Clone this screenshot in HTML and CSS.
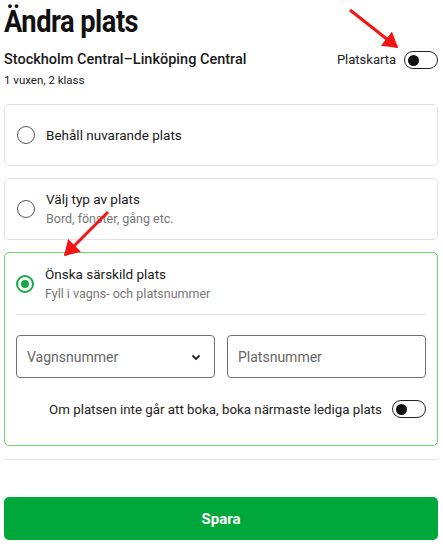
FILE: index.html
```html
<!DOCTYPE html>
<html lang="sv">
<head>
<meta charset="utf-8">
<link rel="stylesheet" href="styles.css">
</head>
<body>
<div class="page">
  <h1 class="title"><span class="title-text">Ändra plats</span></h1>
  <div class="trip">
    <div class="trip-info">
      <div class="route">Stockholm Central–Linköping Central</div>
      <div class="pax">1 vuxen, 2 klass</div>
    </div>
    <div class="map-toggle">
      <span class="map-label">Platskarta</span>
      <span class="toggle"><span class="knob"></span></span>
    </div>
  </div>

  <div class="card">
    <div class="option">
      <span class="radio"></span>
      <div class="opt-text"><div class="opt-title">Behåll nuvarande plats</div></div>
    </div>
  </div>

  <div class="card">
    <div class="option">
      <span class="radio"></span>
      <div class="opt-text">
        <div class="opt-title">Välj typ av plats</div>
        <div class="opt-sub">Bord, fönster, gång etc.</div>
      </div>
    </div>
  </div>

  <div class="card card-active">
    <div class="option">
      <span class="radio radio-on"><span class="dot"></span></span>
      <div class="opt-text">
        <div class="opt-title">Önska särskild plats</div>
        <div class="opt-sub">Fyll i vagns- och platsnummer</div>
      </div>
    </div>
    <div class="divider"></div>
    <div class="fields">
      <div class="field select">
        <span class="ph">Vagnsnummer</span>
        <svg class="chev" width="10" height="7" viewBox="0 0 10 7"><path d="M1.5 1.5 L5 5 L8.5 1.5" fill="none" stroke="#222" stroke-width="1.8"/></svg>
      </div>
      <div class="field">
        <span class="ph">Platsnummer</span>
      </div>
    </div>
    <div class="nearest">
      <span class="near-label">Om platsen inte går att boka, boka närmaste lediga plats</span>
      <span class="toggle"><span class="knob"></span></span>
    </div>
  </div>

  <div class="rule"></div>

  <button class="save">Spara</button>

  <svg class="arrows" width="443" height="544" viewBox="0 0 443 544">
    <defs>
      <marker id="ah" markerWidth="6" markerHeight="6" refX="4.5" refY="3" orient="auto" markerUnits="strokeWidth">
        <path d="M0 0 L5 3 L0 6 Z" fill="#f41414"/>
      </marker>
    </defs>
    <line x1="350" y1="10" x2="397" y2="47" stroke="#f41414" stroke-width="3" marker-end="url(#ah)"/>
    <line x1="108" y1="212" x2="65" y2="255" stroke="#f41414" stroke-width="3" marker-end="url(#ah)"/>
  </svg>
</div>
</body>
</html>
```

FILE: styles.css
```css
* { box-sizing: border-box; }
html, body { margin: 0; padding: 0; background: #fff; }
body {
  font-family: Roboto, "Noto Sans", "DejaVu Sans", sans-serif;
  color: #1a1a1a;
  width: 443px;
  height: 544px;
  overflow: hidden;
}
.page {
  position: relative;
  padding: 4px 5px 0 4px;
  display: flex;
  flex-direction: column;
}
.title {
  margin: 0;
  font-size: 31px;
  line-height: 36px;
  font-weight: 700;
  color: #111;
}
.title-text {
  display: inline-block;
  letter-spacing: -0.6px;
  transform: scaleX(0.88);
  transform-origin: left center;
}
.trip {
  margin-top: 10px;
  display: flex;
  justify-content: space-between;
  align-items: flex-start;
}
.route {
  font-size: 14.5px;
  line-height: 20px;
  font-weight: 500;
  color: #1a1a1a;
}
.pax {
  font-size: 11.5px;
  line-height: 16px;
  margin-top: 2px;
  color: #222;
}
.map-toggle {
  display: flex;
  align-items: center;
  gap: 8px;
  margin-top: 1px;
}
.map-label {
  font-size: 13px;
  line-height: 18px;
  color: #222;
}
.toggle {
  width: 34px;
  height: 18px;
  border: 1.5px solid #222;
  border-radius: 9px;
  display: flex;
  align-items: center;
  padding-left: 3px;
  background: #fff;
}
.knob {
  width: 11px;
  height: 11px;
  border-radius: 50%;
  background: #111;
}
.card {
  border: 1px solid #e3e3e3;
  border-radius: 5px;
  margin-top: 12px;
  padding: 0 12px;
}
.trip + .card { margin-top: 16px; }
.option {
  display: flex;
  align-items: center;
  gap: 11px;
  min-height: 60px;
}
.radio {
  width: 18px;
  height: 18px;
  border: 1.5px solid #555;
  border-radius: 50%;
  flex: none;
  display: flex;
  align-items: center;
  justify-content: center;
}
.radio-on {
  border: 2.5px solid #17a84a;
}
.dot {
  width: 8px;
  height: 8px;
  border-radius: 50%;
  background: #17a84a;
}
.opt-title {
  font-size: 13.5px;
  line-height: 19px;
  color: #1a1a1a;
}
.opt-sub {
  font-size: 12.5px;
  line-height: 18px;
  color: #777;
  margin-top: 1px;
}
.card-active {
  border: 1.5px solid #6ad86a;
  padding: 0 11px;
}
.card-active .option { min-height: 61px; }
.divider {
  height: 1px;
  background: #e3e3e3;
}
.fields {
  margin-top: 20px;
  display: grid;
  grid-template-columns: 1fr 1fr;
  gap: 12px;
}
.field {
  height: 43px;
  border: 1px solid #707070;
  border-radius: 4px;
  display: flex;
  align-items: center;
  justify-content: space-between;
  padding: 0 13px 0 10px;
}
.ph {
  font-size: 14px;
  color: #666;
}
.chev { margin-top: 1px; }
.nearest {
  display: flex;
  justify-content: flex-end;
  align-items: center;
  gap: 10px;
  margin-top: 22px;
  margin-bottom: 27px;
}
.near-label {
  font-size: 13.3px;
  color: #222;
}
.rule {
  margin-top: 13px;
  height: 1px;
  background: #e6e6e6;
}
.save {
  margin-top: 37px;
  height: 43px;
  border: none;
  border-radius: 5px;
  background: #00a83b;
  color: #fff;
  font-family: inherit;
  font-size: 15px;
  font-weight: 700;
}
.arrows {
  position: absolute;
  left: 0;
  top: 0;
  pointer-events: none;
}
```
